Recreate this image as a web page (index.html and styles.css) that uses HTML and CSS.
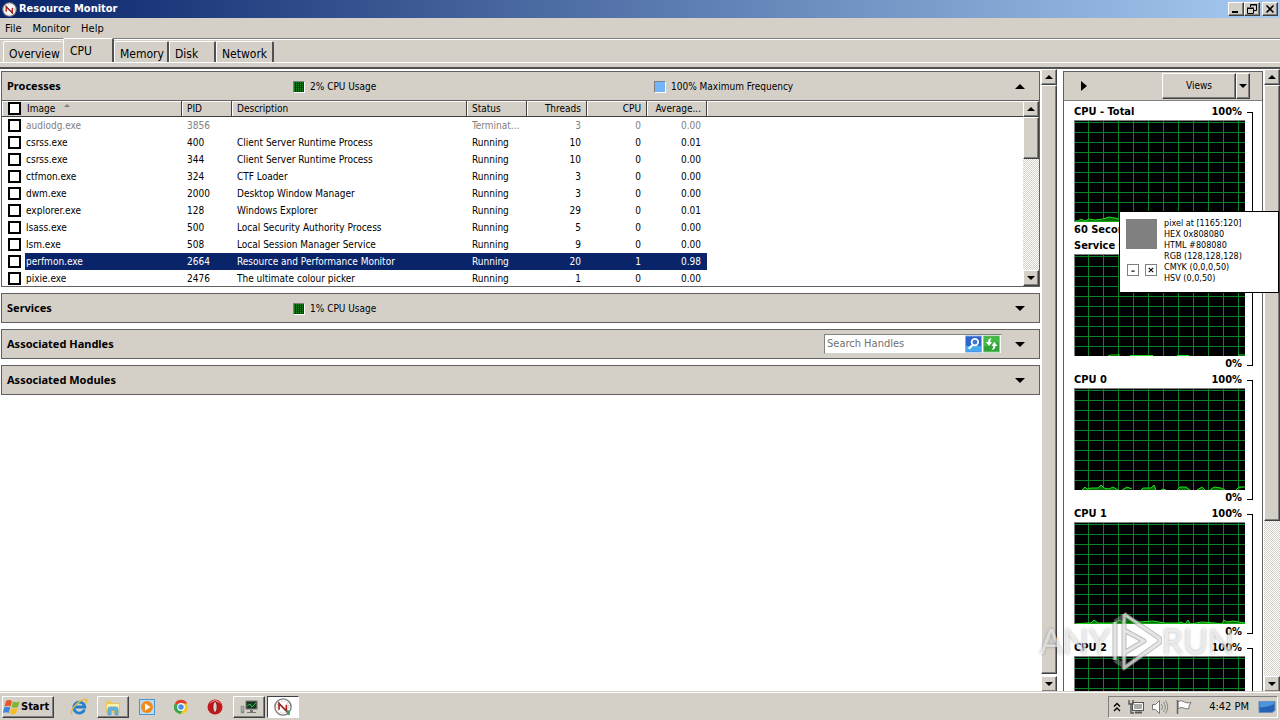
FILE: index.html
```
<!DOCTYPE html>
<html lang="en">
<head>
  <meta charset="UTF-8" />
  <meta name="viewport" content="width=device-width, initial-scale=1.0"/>
  <title>Resource Monitor</title>
  <link rel="stylesheet" href="styles.css">
</head>
<body>

  <!-- Shared shapes -->
  <svg class="defs" width="0" height="0" aria-hidden="true">
    <defs>
      <symbol id="up" viewBox="0 0 10 5"><path d="M5 0L10 5H0Z"/></symbol>
      <symbol id="down" viewBox="0 0 10 5"><path d="M0 0H10L5 5Z"/></symbol>
      <symbol id="gauge" viewBox="0 0 16 16">
        <circle cx="8" cy="8" r="7.2" fill="#fff" stroke="#777" stroke-width="1.2"/>
        <circle cx="8" cy="8" r="5.2" fill="none" stroke="#b5b5b5" stroke-dasharray="1 1.5"/>
        <path d="M4.5 10.500V5L11 11.500V6" fill="none" stroke="#c11d1d" stroke-width="1.500"/>
        <path d="M4 4L12 13" stroke="#444" stroke-width=".8"/>
      </symbol>
    </defs>
  </svg>

  <header class="titlebar">
    <svg class="app-icon" viewBox="0 0 16 16"><use href="#gauge"/></svg>
    <h1>Resource Monitor</h1>
    <div class="window-buttons">
      <button aria-label="Minimize"><svg viewBox="0 0 12 10"><path d="M2 8H8" stroke="#000" stroke-width="2"/></svg></button>
      <button aria-label="Restore"><svg viewBox="0 0 12 10"><path d="M4.500 3V.5H10.500V6.500H8M4 1H11M1.500 4.500H7.500V9.500H1.500ZM1 4H8" stroke="#000" fill="none"/></svg></button>
      <button class="close" aria-label="Close"><svg viewBox="0 0 12 10"><path d="M2.500 1.500L9.500 8.500M9.500 1.500L2.500 8.500" stroke="#000" stroke-width="1.600"/></svg></button>
    </div>
  </header>

  <nav class="menubar">
    <button>File</button>
    <button>Monitor</button>
    <button>Help</button>
  </nav>

  <nav class="tabs">
    <button class="tab tab-overview">Overview</button>
    <button class="tab tab-cpu active">CPU</button>
    <button class="tab tab-memory">Memory</button>
    <button class="tab tab-disk">Disk</button>
    <button class="tab tab-network">Network</button>
  </nav>

  <main class="workspace">
    <div class="sections">
      <!-- Processes -->
      <section class="section">
        <div class="section-head">
          <h2>Processes</h2>
          <span class="legend"><i class="key green"></i>2% CPU Usage</span>
          <span class="legend"><i class="key blue"></i>100% Maximum Frequency</span>
          <button class="toggle" aria-label="Collapse"><svg viewBox="0 0 10 5"><use href="#up"/></svg></button>
        </div>
        <div class="list">
          <table>
            <colgroup>
              <col class="c-check"><col class="c-image"><col class="c-pid"><col class="c-desc">
              <col class="c-num"><col class="c-num"><col class="c-num"><col class="c-num"><col>
            </colgroup>
            <thead>
              <tr>
                <th class="plain"><input type="checkbox" aria-label="Select all"></th>
                <th>Image <svg class="sort" viewBox="0 0 10 5"><use href="#up"/></svg></th>
                <th>PID</th><th>Description</th><th>Status</th>
                <th class="num">Threads</th><th class="num">CPU</th><th class="num">Average...</th><th class="rest"></th>
              </tr>
            </thead>
            <tbody>
              <tr class="ended"><td><input type="checkbox" aria-label="audiodg.exe"></td><td>audiodg.exe</td><td>3856</td><td></td><td>Terminat...</td><td>3</td><td>0</td><td>0.00</td></tr>
              <tr><td><input type="checkbox" aria-label="csrss.exe"></td><td>csrss.exe</td><td>400</td><td>Client Server Runtime Process</td><td>Running</td><td>10</td><td>0</td><td>0.01</td></tr>
              <tr><td><input type="checkbox" aria-label="csrss.exe"></td><td>csrss.exe</td><td>344</td><td>Client Server Runtime Process</td><td>Running</td><td>10</td><td>0</td><td>0.00</td></tr>
              <tr><td><input type="checkbox" aria-label="ctfmon.exe"></td><td>ctfmon.exe</td><td>324</td><td>CTF Loader</td><td>Running</td><td>3</td><td>0</td><td>0.00</td></tr>
              <tr><td><input type="checkbox" aria-label="dwm.exe"></td><td>dwm.exe</td><td>2000</td><td>Desktop Window Manager</td><td>Running</td><td>3</td><td>0</td><td>0.00</td></tr>
              <tr><td><input type="checkbox" aria-label="explorer.exe"></td><td>explorer.exe</td><td>128</td><td>Windows Explorer</td><td>Running</td><td>29</td><td>0</td><td>0.01</td></tr>
              <tr><td><input type="checkbox" aria-label="lsass.exe"></td><td>lsass.exe</td><td>500</td><td>Local Security Authority Process</td><td>Running</td><td>5</td><td>0</td><td>0.00</td></tr>
              <tr><td><input type="checkbox" aria-label="lsm.exe"></td><td>lsm.exe</td><td>508</td><td>Local Session Manager Service</td><td>Running</td><td>9</td><td>0</td><td>0.00</td></tr>
              <tr class="selected"><td><input type="checkbox" aria-label="perfmon.exe"></td><td>perfmon.exe</td><td>2664</td><td>Resource and Performance Monitor</td><td>Running</td><td>20</td><td>1</td><td>0.98</td></tr>
              <tr><td><input type="checkbox" aria-label="pixie.exe"></td><td>pixie.exe</td><td>2476</td><td>The ultimate colour picker</td><td>Running</td><td>1</td><td>0</td><td>0.00</td></tr>
            </tbody>
          </table>
          <div class="scrollbar">
            <button aria-label="Scroll up"><svg viewBox="0 0 10 5"><use href="#up"/></svg></button>
            <div class="thumb thumb-list"></div>
            <div class="track"></div>
            <button aria-label="Scroll down"><svg viewBox="0 0 10 5"><use href="#down"/></svg></button>
          </div>
        </div>
      </section>

      <section class="section">
        <div class="section-head">
          <h2>Services</h2>
          <span class="legend"><i class="key green"></i>1% CPU Usage</span>
          <button class="toggle" aria-label="Expand"><svg viewBox="0 0 10 5"><use href="#down"/></svg></button>
        </div>
      </section>

      <section class="section">
        <div class="section-head">
          <h2>Associated Handles</h2>
          <div class="search">
            <input type="text" placeholder="Search Handles" aria-label="Search Handles">
            <button aria-label="Search">
              <svg viewBox="0 0 18 18"><rect x=".5" y=".5" width="17" height="17" fill="#2d63cf" stroke="#8cb0ea"/><path d="M1 11H17V17H1Z" fill="#49a9ee"/><circle cx="10.500" cy="7" r="3.500" fill="#3a76d8" stroke="#fff" stroke-width="1.800"/><path d="M8 10L4 14" stroke="#fff" stroke-width="2.200"/></svg>
            </button>
            <button aria-label="Refresh">
              <svg viewBox="0 0 18 18"><rect x=".5" y=".5" width="17" height="17" fill="#2ea336" stroke="#8fce8f"/><path d="M1 1H17V7L1 12Z" fill="#46b848"/><path d="M9 3Q5 3 5.500 7H3L6.500 11L9.500 7H7.500Q7.500 5 9 3ZM9 15Q13.500 15 13 11H15.500L12 7L9 11H11Q11 13 9 15Z" fill="#fff"/></svg>
            </button>
          </div>
          <button class="toggle" aria-label="Expand"><svg viewBox="0 0 10 5"><use href="#down"/></svg></button>
        </div>
      </section>

      <section class="section">
        <div class="section-head">
          <h2>Associated Modules</h2>
          <button class="toggle" aria-label="Expand"><svg viewBox="0 0 10 5"><use href="#down"/></svg></button>
        </div>
      </section>
    </div>

    <div class="scrollbar">
      <button aria-label="Scroll up"><svg viewBox="0 0 10 5"><use href="#up"/></svg></button>
      <div class="thumb thumb-full"></div>
      <button aria-label="Scroll down"><svg viewBox="0 0 10 5"><use href="#down"/></svg></button>
    </div>

    <!-- Graphs -->
    <aside class="graphs">
      <div class="graphs-head">
        <button class="collapse" aria-label="Hide graphs"><svg viewBox="0 0 6 10"><path d="M0 0L6 5L0 10Z"/></svg></button>
        <div class="views">
          <button>Views</button>
          <button class="views-arrow" aria-label="Choose view"><svg viewBox="0 0 10 5"><use href="#down"/></svg></button>
        </div>
      </div>
      <div class="graphs-body">
        <div class="graph">
          <div class="plot">
            <div class="label"><span>CPU - Total</span><span>100%</span></div>
            <svg viewBox="0 0 170 101"><path d="M0 100H3L6 98L10 100L14 98L20 99L28 98L34 96L40 97L46 99L60 98L70 100L170 99V101H0Z" fill="#0a6a0a" stroke="#1fe01f"/></svg>
            <div class="label"><span>60 Seconds</span><span>0%</span></div>
          </div>
          <div class="bracket"></div>
        </div>
        <div class="graph">
          <div class="plot">
            <div class="label"><span>Service CPU Usage</span><span>100%</span></div>
            <svg viewBox="0 0 170 101"><path d="M33 101L36 100H45M55 100.500H78M102 100.500H114M163 100H170" fill="none" stroke="#1fe01f"/></svg>
            <div class="label end"><span>0%</span></div>
          </div>
          <div class="bracket"></div>
        </div>
        <div class="graph">
          <div class="plot">
            <div class="label"><span>CPU 0</span><span>100%</span></div>
            <svg viewBox="0 0 170 101"><path d="M7 101L10 98L12 100L16 99H23L26 96L29 99L34 100L38 98L43 101M47 101L52 98L57 100M66 101L68 99H76L79 96L81 101M86 101L88 100L91 101M102 101L105 98H111L115 101M122 101L127 98L130 101M135 101L139 98L146 99L150 101M161 101L164 98H170" fill="#0a6a0a" stroke="#1fe01f"/></svg>
            <div class="label end"><span>0%</span></div>
          </div>
          <div class="bracket"></div>
        </div>
        <div class="graph">
          <div class="plot">
            <div class="label"><span>CPU 1</span><span>100%</span></div>
            <svg viewBox="0 0 170 101"><path d="M0 101L12 100L16 100L19 97L23 100H38L44 97L48 99L52 93L57 97L64 99L78 98L90 100L104 100L106 99L110 101L113 97L115 101L127 99L140 100L147 101L149 97L152 99L158 98L170 100V101Z" fill="#0a6a0a" stroke="#1fe01f"/></svg>
            <div class="label end"><span>0%</span></div>
          </div>
          <div class="bracket"></div>
        </div>
        <div class="graph">
          <div class="plot">
            <div class="label"><span>CPU 2</span><span>100%</span></div>
            <svg viewBox="0 0 170 101"></svg>
          </div>
          <div class="bracket"></div>
        </div>
      </div>
    </aside>

    <div class="scrollbar">
      <button aria-label="Scroll up"><svg viewBox="0 0 10 5"><use href="#up"/></svg></button>
      <div class="thumb thumb-graphs"></div>
      <div class="track"></div>
      <button aria-label="Scroll down"><svg viewBox="0 0 10 5"><use href="#down"/></svg></button>
    </div>
  </main>

  <!-- Taskbar -->
  <footer class="taskbar">
    <button class="start">
      <svg viewBox="0 0 18 16"><path d="M3 2Q6 0 9 2L7.500 7.500Q5 6 1.500 7.500Z" fill="#e8562a"/><path d="M10 2.500Q13 4 16.500 2.500L15 8Q12 9.500 8.500 8Z" fill="#7db72f"/><path d="M1.200 8.500Q4.500 7 7.200 8.500L5.700 14Q3 12.500 0 14Z" fill="#3f86d8"/><path d="M8.200 9Q11.500 10.500 14.700 9L13 14.500Q10 16 6.700 14.500Z" fill="#f6bd27"/></svg>
      Start
    </button>
    <div class="tasks">
      <button class="task" aria-label="Internet Explorer">
        <svg viewBox="0 0 18 18"><path d="M14.500 11.500A5.500 5.500 0 1 1 14.800 9H5" fill="none" stroke="#2180d0" stroke-width="2.800"/><path d="M2 16.500C-1 13 9 1 16 1.500C18 2 16 5 15 6" fill="none" stroke="#e9b93a" stroke-width="1.400"/></svg>
      </button>
      <button class="task raised" aria-label="Explorer">
        <svg viewBox="0 0 18 18"><path d="M2 3H7L8 5H16V15H2Z" fill="#e9c75c"/><path d="M3 6H15V12H3Z" fill="#faefad"/><path d="M4 17V11Q4 9 6 9H12Q14 9 14 11V17H11V12H7V17Z" fill="#64b4e0" stroke="#4a93c8" stroke-width=".6"/></svg>
      </button>
      <button class="task" aria-label="Media Player">
        <svg viewBox="0 0 18 18"><rect x="1.500" y="1.500" width="15" height="15" fill="#b9dcf6" stroke="#4e94cf"/><circle cx="9" cy="9" r="6" fill="#f08a1d"/><path d="M7 5.500L12.500 9L7 12.500Z" fill="#fff"/></svg>
      </button>
      <button class="task" aria-label="Chrome">
        <svg viewBox="0 0 18 18"><circle cx="9" cy="9" r="7" fill="#f8c81c"/><path d="M9 9L3 5.300A7 7 0 0 1 15.200 5.500H9Z" fill="#df3e30"/><path d="M9 9L3 5.300A7 7 0 0 0 8.500 16L12 10.500Z" fill="#35a651"/><circle cx="9" cy="9" r="3.300" fill="#4a8cf0" stroke="#fff" stroke-width="1.200"/></svg>
      </button>
      <button class="task" aria-label="Opera">
        <svg viewBox="0 0 18 18"><circle cx="9" cy="9" r="7.500" fill="#c5161c"/><path d="M3 6Q9 1 15 6Q12 2 9 2Q6 2 3 6Z" fill="#ef8080"/><ellipse cx="9" cy="9" rx="2.200" ry="5.500" fill="#d4d0c8" stroke="#820c10"/></svg>
      </button>
      <button class="task raised" aria-label="Console">
        <svg viewBox="0 0 18 18"><rect x="6" y="3" width="11" height="8" fill="#163a20" stroke="#777"/><path d="M7 8L10 6L12 9L16 5" stroke="#38c060" fill="none"/><path d="M10 12H13V14H16V15H7V14H10Z" fill="#777"/><rect x="1" y="8" width="3" height="7" fill="#aaa" stroke="#777" stroke-width=".5"/><path d="M1 14H4" stroke="#3cab4c"/></svg>
      </button>
      <button class="task pressed" aria-label="Resource Monitor">
        <svg viewBox="0 0 16 16"><use href="#gauge"/><path d="M11 11H14V15H12Z" fill="#3f9a5a"/></svg>
      </button>
    </div>
    <div class="tray">
      <svg class="more" viewBox="0 0 8 10"><path d="M1 4.500L4 1.500L7 4.500M1 9L4 6L7 9" fill="none" stroke="#000" stroke-width="1.400"/></svg>
      <svg viewBox="0 0 18 16"><rect x="5.500" y="3.500" width="11" height="8" fill="#aaa" stroke="#555"/><path d="M6.500 4.500H15.500V10.500H6.500Z" fill="none" stroke="#fff"/><path d="M8 13.500H15" stroke="#555" stroke-width="2"/><path d="M2 1V5H6V1M4 5V14H7" fill="none" stroke="#555" stroke-width="1.400"/></svg>
      <svg viewBox="0 0 18 16"><path d="M1.500 5.500H4.500L8.500 1.500V14.500L4.500 10.500H1.500Z" fill="#fff" stroke="#777"/><path d="M10.500 5Q12.500 8 10.500 11M12.500 3Q16 8 12.500 13M14.500 1.500Q19 8 14.500 14.500" fill="none" stroke="#888"/></svg>
      <svg viewBox="0 0 18 16"><path d="M3 2.500Q6 .5 9.500 3Q12 4.500 16 3.500Q13 7 14 9.500Q11 10.500 9 9Q6 8 3 9.500Z" fill="#fff" stroke="#777"/><path d="M2.500 1V15" stroke="#666" stroke-width="1.500"/></svg>
      <time>4:42 PM</time>
      <svg viewBox="0 0 18 16"><path d="M1 2.500H17V11.500L14 13.500H1Z" fill="#2663b4" stroke="#6c8fbd"/><path d="M2 3H16V5Q9 9 2 8Z" fill="#4e95df"/></svg>
    </div>
  </footer>

  <!-- Colour picker window -->
  <div class="picker">
    <div class="picker-side">
      <div class="swatch"></div>
      <div class="picker-buttons">
        <button aria-label="Minimize"><svg viewBox="0 0 9 9"><path d="M3 5.500H6" stroke="#000"/></svg></button>
        <button aria-label="Close"><svg viewBox="0 0 9 9"><path d="M2.500 2.500L6.500 6.500M6.500 2.500L2.500 6.500" stroke="#000"/></svg></button>
      </div>
    </div>
    <div class="picker-text">
      <p>pixel at [1165:120]</p>
      <p>HEX 0x808080</p>
      <p>HTML #808080</p>
      <p>RGB (128,128,128)</p>
      <p>CMYK (0,0,0,50)</p>
      <p>HSV (0,0,50)</p>
    </div>
  </div>

  <div class="watermark">
    <span>ANY</span>
    <svg viewBox="0 0 52 62"><path d="M14 4L49 28Q51 31 49 33L14 58V4M5 12V50M5 12L14 6M5 50L14 56M14 20L34 31L14 43" fill="none" stroke="#888" stroke-opacity=".55" stroke-width="5" stroke-linejoin="round"/><path d="M14 4L49 28Q51 31 49 33L14 58V4M5 12V50M14 20L34 31L14 43" fill="none" stroke="#fff" stroke-opacity=".6" stroke-width="3" stroke-linejoin="round"/></svg>
    <span>RUN</span>
  </div>

</body>
</html>
```

FILE: styles.css
```
* {
  box-sizing: border-box;
}
body {
  margin: 0;
  height: 100vh;
  display: flex;
  flex-direction: column;
  overflow: hidden;
  position: relative;
  background: #d4d0c8;
  color: #000;
  font: 10px/14px "DejaVu Sans Condensed", "DejaVu Sans", sans-serif;
}
h1, h2, p {
  margin: 0;
}
button, input {
  font: inherit;
  color: inherit;
  margin: 0;
  padding: 0;
}
button {
  border: none;
  background: none;
}
svg {
  display: block;
}
.defs {
  position: absolute;
}

/* Title bar */
.titlebar {
  display: flex;
  align-items: center;
  height: 18px;
  flex: none;
  padding: 0 2px;
  background: linear-gradient(90deg, #0a246a, #a6caf0);
  color: #fff;
}
.app-icon {
  width: 15px;
  height: 15px;
}
.titlebar h1 {
  flex: 1;
  margin-left: 2px;
  font-size: 11px;
}
.window-buttons {
  display: flex;
}
.window-buttons button {
  display: flex;
  align-items: center;
  justify-content: center;
  width: 16px;
  height: 14px;
}
.window-buttons .close {
  margin-left: 2px;
}
.window-buttons svg {
  width: 12px;
  height: 10px;
}
.window-buttons button, .scrollbar button, .thumb, .views button, .start, .raised {
  background: #d4d0c8;
  border: 1px solid;
  border-color: #fff #404040 #404040 #fff;
  box-shadow: inset -1px -1px #808080;
}

/* Menu and tabs */
.menubar {
  display: flex;
  flex: none;
  gap: 11px;
  height: 21px;
  padding: 1px 5px 0;
  border-bottom: 1px solid #808080;
  font-size: 11px;
}
.tabs {
  display: flex;
  align-items: flex-end;
  flex: none;
  height: 30px;
  padding: 0 3px 5px;
  border-top: 1px solid #fff;
  border-bottom: 2px solid #505050;
  background: linear-gradient(#fff, #fff) 0 22px / 100% 1px no-repeat;
  font-size: 12px;
}
.tab {
  height: 21px;
  border: 1px solid #fff;
  border-bottom: none;
  border-right: 2px solid #505050;
  border-radius: 2px 2px 0 0;
  text-align: left;
  padding: 3px 0 0 5px;
  background: #d4d0c8;
}
.tab-overview {
  width: 60px;
  border-right: none;
}
.tab.active {
  width: 51px;
  height: 24px;
  padding: 0 0 0 6px;
}
.tab-memory {
  width: 55px;
}
.tab-disk {
  width: 47px;
}
.tab-network {
  width: 58px;
}

/* Main area */
.workspace {
  display: flex;
  flex: 1;
  min-height: 0;
  overflow: hidden;
  background: #fff;
}
.sections {
  flex: 1;
  min-width: 0;
  display: flex;
  flex-direction: column;
  gap: 6px;
  padding: 2px 1px 0;
}
.section {
  border: 1px solid #606060;
}
.section-head {
  display: flex;
  align-items: center;
  height: 28px;
  padding: 0 14px 0 5px;
  background: #d4d0c8;
}
.section h2 {
  width: 286px;
  font: bold 11px/16px "Noto Sans", sans-serif;
}
.legend {
  display: flex;
  align-items: center;
  gap: 5px;
  width: 361px;
  padding-top: 1px;
}
.key {
  width: 12px;
  height: 12px;
  border: 1px solid;
  border-color: #808080 #fff #fff #808080;
}
.green {
  background: repeating-linear-gradient(90deg, transparent 0 1px, #08400c 1px 2px), repeating-linear-gradient(#1b8a22 0 1px, #0c5a10 1px 2px);
}
.blue {
  background: #73b5f8;
}
.toggle {
  margin-left: auto;
}
.toggle svg {
  width: 10px;
  height: 5px;
}
.search {
  display: flex;
  align-items: center;
  margin-left: auto;
  height: 20px;
  background: #fff;
  border: 1px solid;
  border-color: #808080 #d4d0c8 #d4d0c8 #808080;
}
.search + .toggle {
  margin-left: 13px;
}
.search input {
  width: 140px;
  padding-left: 2px;
  border: none;
  background: none;
  font-size: 11px;
}
.search input::placeholder {
  color: #707070;
  opacity: 1;
}
.search button {
  margin-right: 1px;
}
.search svg {
  width: 17px;
  height: 18px;
}

/* Process list */
.list {
  display: flex;
  height: 186px;
  overflow: hidden;
  border-top: 1px solid #606060;
}
table {
  flex: 1;
  width: 100%;
  table-layout: fixed;
  border-collapse: separate;
  border-spacing: 0;
}
.c-check {
  width: 23px;
}
.c-image {
  width: 157px;
}
.c-pid {
  width: 50px;
}
.c-desc {
  width: 235px;
}
.c-num {
  width: 60px;
}
th {
  height: 16px;
  padding: 1px 5px 0;
  background: #d4d0c8;
  border-right: 1px solid #404040;
  border-bottom: 1px solid #404040;
  box-shadow: inset 1px 1px #fff;
  font-weight: normal;
  line-height: 14px;
  text-align: left;
  white-space: nowrap;
}
th:nth-child(2) {
  padding-left: 2px;
  box-shadow: inset 0 1px #fff;
}
th.plain {
  border-right: none;
}
th.rest {
  border-right: none;
}
th.num {
  text-align: right;
}
.sort {
  display: inline-block;
  width: 6px;
  height: 3px;
  margin: 0 0 5px 6px;
  fill: #808080;
}
td {
  height: 17px;
  padding: 0 6px 0 5px;
  line-height: 14px;
  white-space: nowrap;
}
th:first-child, td:first-child {
  padding: 0 0 0 6px;
}
td:nth-child(2) {
  padding-left: 1px;
}
td:nth-child(n+6) {
  text-align: right;
}
.ended {
  color: #808080;
}
.selected td:nth-child(n+2) {
  background: #0a246a;
  color: #fff;
}
input[type="checkbox"] {
  appearance: none;
  display: block;
  width: 13px;
  height: 13px;
  border: 2px solid #000;
  background: #fff;
}

/* Scroll bars */
.scrollbar {
  display: flex;
  flex-direction: column;
  flex: none;
  width: 16px;
}
.scrollbar button {
  display: flex;
  align-items: center;
  justify-content: center;
  flex: none;
  width: 16px;
  height: 16px;
}
.scrollbar svg {
  width: 8px;
  height: 4px;
}
.track {
  flex: 1;
  background: repeating-conic-gradient(#d4d0c8 0 25%, #fff 0 50%) 0 0 / 2px 2px;
}
.thumb-list {
  height: 42px;
}
.thumb-full {
  flex: 1;
  margin-bottom: 2px;
}
.thumb-graphs {
  height: 436px;
}

/* Graphs */
.graphs {
  display: flex;
  flex-direction: column;
  flex: none;
  width: 200px;
  margin: 2px 1px 0 6px;
  border: 1px solid #606060;
  border-bottom: none;
}
.graphs-head {
  display: flex;
  align-items: center;
  justify-content: space-between;
  flex: none;
  height: 29px;
  padding: 0 12px 0 17px;
  background: #d4d0c8;
  border-bottom: 1px solid #808080;
}
.collapse svg {
  width: 6px;
  height: 10px;
}
.views {
  display: flex;
}
.views button {
  width: 74px;
  height: 26px;
}
.views .views-arrow {
  display: flex;
  align-items: center;
  justify-content: center;
  width: 14px;
}
.views svg {
  width: 8px;
  height: 4px;
}
.graphs-body {
  flex: 1;
  min-height: 0;
  overflow: hidden;
  padding: 3px 9px 0 10px;
}
.graph {
  display: flex;
  justify-content: space-between;
  height: 134px;
}
.plot {
  width: 171px;
}
.plot svg {
  width: 171px;
  height: 102px;
  border: 1px solid #808080;
  border-width: 1px 0 0 1px;
  background-color: #000;
  background-image: linear-gradient(90deg, #0a8228 1px, transparent 1px), linear-gradient(#0a8228 1px, transparent 1px);
  background-size: 15px 10px;
  background-position: 13px 11px;
}
.label {
  display: flex;
  justify-content: space-between;
  padding-right: 3px;
  font-size: 11px;
  font-weight: bold;
  line-height: 16px;
}
.label.end {
  justify-content: flex-end;
}
.bracket {
  width: 6px;
  margin: 8px 0 6px;
  border: 1px solid #000;
  border-left: none;
}

/* Taskbar */
.taskbar {
  display: flex;
  align-items: center;
  flex: none;
  height: 28px;
  padding: 1px 2px 0;
  border-top: 1px solid #fff;
  box-shadow: 0 -1px #d4d0c8;
}
.start {
  display: flex;
  align-items: center;
  width: 52px;
  height: 22px;
  font-size: 11px;
  font-weight: bold;
}
.start svg {
  width: 18px;
  height: 16px;
}
.tasks {
  display: flex;
  flex: 1;
  gap: 2px;
  margin-left: 9px;
}
.task {
  display: flex;
  align-items: center;
  justify-content: center;
  width: 32px;
  height: 22px;
}
.task svg {
  width: 18px;
  height: 18px;
}
.pressed {
  background: #fff;
  border: 1px solid;
  border-color: #404040 #fff #fff #404040;
}
.tray {
  display: flex;
  align-items: center;
  gap: 6px;
  height: 22px;
  padding: 0 1px 0 4px;
  border: 1px solid;
  border-color: #808080 #fff #fff #808080;
  font-size: 11px;
}
.tray svg {
  width: 18px;
  height: 16px;
}
.tray .more {
  width: 8px;
  height: 10px;
}
.tray time {
  margin: 0 3px 0 10px;
}

/* Floating colour picker */
.picker {
  position: absolute;
  top: 211px;
  right: 1px;
  display: flex;
  gap: 7px;
  width: 160px;
  height: 82px;
  padding: 6px;
  background: #fff;
  border: 1px solid #000;
  font-size: 9px;
  line-height: 11px;
}
.picker-side {
  display: flex;
  flex-direction: column;
  gap: 15px;
  padding-top: 1px;
}
.swatch {
  width: 31px;
  height: 30px;
  background: #808080;
}
.picker-buttons {
  display: flex;
  justify-content: space-between;
  padding-left: 1px;
}
.picker-buttons button {
  width: 12px;
  height: 12px;
  border: 1px solid #808080;
}

.watermark {
  position: absolute;
  right: 46px;
  bottom: 48px;
  display: flex;
  align-items: center;
  color: rgba(255, 255, 255, .65);
  font: 34px/62px "Liberation Sans Narrow", Lato, sans-serif;
  text-shadow: 0 0 3px rgba(0, 0, 0, .3);
  pointer-events: none;
}
.watermark svg {
  width: 52px;
  height: 62px;
}
```
